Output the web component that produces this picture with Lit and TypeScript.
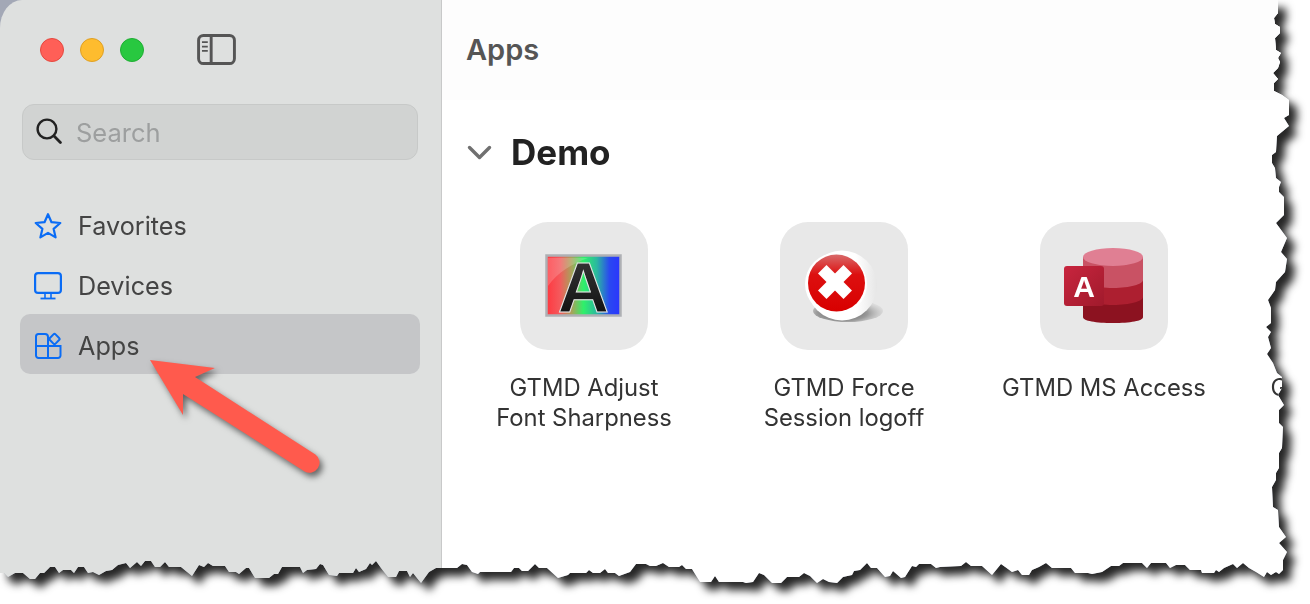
import { LitElement, html, css, svg } from "lit";
import { customElement } from "lit/decorators.js";

// Torn-paper outline of the captured window, as [x, y] pairs, clockwise from the top left.
const EDGE: number[][] = [
  [0,0],[1278,0],[1278,13],[1274,18],[1275,24],[1280,27],[1280,33],[1275,38],[1276,50],[1281,53],[1278,58],[1280,62],[1278,68],[1273,73],[1278,79],[1274,83],[1274,91],[1282,95],[1289,100],[1289,115],[1284,118],[1289,126],[1277,136],[1276,152],[1272,155],[1272,163],[1275,168],[1276,178],[1281,182],[1279,187],[1279,192],[1284,197],
  [1284,215],[1276,223],[1287,238],[1281,252],[1287,259],[1285,272],[1276,282],[1275,290],[1268,300],[1271,308],[1271,323],[1266,327],[1271,332],[1268,337],[1271,348],[1267,354],[1273,363],[1277,373],[1282,377],[1282,388],[1278,395],[1284,405],[1279,410],[1279,423],[1283,427],[1282,448],[1279,453],[1279,468],[1276,473],[1276,480],[1272,487],[1273,507],[1278,510],[1279,527],[1286,537],[1279,543],[1287,552],[1283,560],
  [1283,570],[1279,574],[1276,572],[1271,575],[1267,572],[1264,577],[1256,572],[1249,568],[1243,563],[1237,568],[1233,564],[1224,568],[1219,572],[1216,570],[1214,573],[1202,573],[1201,570],[1190,570],[1185,565],[1176,565],[1170,568],[1166,563],[1151,563],[1147,568],[1142,563],[1123,563],[1119,566],[1111,566],[1102,572],[1092,574],[1088,573],[1075,573],[1071,568],[1052,568],[1046,563],[1039,567],[1032,570],[1029,575],[1022,575],[1018,570],[1012,572],[1008,569],[1001,564],[992,575],[982,566],[971,566],[966,562],[961,566],[940,567],[936,568],[931,564],[919,564],[916,567],[912,566],[905,577],[901,578],[893,571],[890,576],[885,577],[877,568],[871,568],[867,563],[860,570],[854,571],[852,575],[843,577],[837,583],[829,582],[823,579],[817,583],[810,576],[804,573],[799,577],[787,577],[781,583],[772,583],[764,575],[759,573],[753,582],[746,583],[743,582],[719,582],[715,576],[711,582],[700,582],[692,569],[686,569],[682,565],[679,567],[669,567],[663,563],[656,566],[650,566],
  [646,564],[636,564],[630,572],[619,576],[615,573],[608,573],[605,569],[600,573],[593,573],[589,570],[586,573],[570,573],[568,575],[558,578],[547,568],[539,568],[535,564],[528,571],[522,571],[519,568],[514,568],[511,572],[480,572],[478,574],[472,572],[467,565],[462,564],[457,568],[436,568],[429,572],[421,583],[413,573],[410,577],[407,571],[399,571],[396,577],[388,577],[381,568],[376,561],[372,565],[370,563],[366,569],[359,572],[356,568],[353,573],[339,573],[337,576],[329,575],[323,565],[320,564],[316,569],[307,570],[303,573],[300,567],[282,567],[278,574],[274,574],[269,578],[255,578],[249,568],[246,568],[239,574],[236,572],[229,572],[225,566],[213,566],[208,563],[204,567],[199,565],[192,576],[181,567],[169,567],[165,562],[160,567],[155,567],[151,561],[145,561],[141,566],[137,562],[130,568],[126,563],[118,565],[112,570],[106,571],[99,575],[93,572],[88,573],[84,567],[78,567],[74,573],[71,570],[63,570],[59,573],[55,567],[50,567],[44,573],[40,573],[35,579],[30,579],[23,573],[15,573],[8,577],[4,573],[0,573],
];
const CLIP = `polygon(${EDGE.map(([x, y]) => `${x}px ${y}px`).join(",")})`;

const ICONS = {
  panel: svg`<svg class="panel-icon" viewBox="0 0 40 32" fill="none" stroke="#555" stroke-width="3"><rect x="1.5" y="1.5" width="37" height="29" rx="5"/><path d="M14.5 2v28"/><path d="M5 8.5h6M5 13h6M5 17.5h6" stroke-width="1.8"/></svg>`,
  search: svg`<svg class="search-icon" viewBox="0 0 26 26" fill="none" stroke="#222" stroke-width="2.4"><circle cx="11" cy="11" r="9.4"/><path d="M17.8 17.8l6.6 6.6" stroke-linecap="round" stroke-width="2.8"/></svg>`,
  star: svg`<svg class="nav-icon" viewBox="0 0 28 28" fill="none" stroke="#0a6cf5" stroke-width="2.2" stroke-linejoin="round"><path d="M14 2.2l3.5 8 8.8.8-6.7 5.8 2 8.6L14 20.9l-7.6 4.5 2-8.6L1.700 11l8.800-.8z"/></svg>`,
  monitor: svg`<svg class="nav-icon" viewBox="0 0 28 28" fill="none" stroke="#0a6cf5" stroke-width="2.2"><rect x="1.100" y="1.100" width="25.800" height="19.800" rx="3"/><path d="M11 21v5M17 21v5" stroke-width="1.600"/><path d="M6.500 26.500h15" stroke-width="1.800"/></svg>`,
  apps: svg`<svg class="nav-icon" viewBox="0 0 28 28" fill="none" stroke="#0a6cf5" stroke-width="2"><path d="M14 8.500V26H4.500A2.500 2.500 0 0 1 2 23.500V4.500A2.500 2.500 0 0 1 4.500 2H11a3 3 0 0 1 3 3v3.500z"/><path d="M2 14h24.500v9.500a2.500 2.500 0 0 1-2.500 2.500h-10"/><rect x="16.500" y="3" width="8" height="8" rx="1.500" transform="rotate(45 20.500 7)"/></svg>`,
};

const SHARPNESS = svg`<svg class="art" viewBox="0 0 128 128">
  <defs>
    <linearGradient id="rgb" x1="0" x2="1" y1="0" y2="0">
      <stop offset="0" stop-color="#ff3840"/><stop offset=".18" stop-color="#f4595c"/><stop offset=".34" stop-color="#a8a25a"/>
      <stop offset=".5" stop-color="#2ff06a"/><stop offset=".68" stop-color="#2bb8a0"/><stop offset=".85" stop-color="#2a48f0"/><stop offset="1" stop-color="#2a35ff"/>
    </linearGradient>
    <linearGradient id="ink" x1="0" x2="0" y1="0" y2="1"><stop offset="0" stop-color="#3c3c3c"/><stop offset="1" stop-color="#0a0a0a"/></linearGradient>
  </defs>
  <rect x="26.500" y="33.500" width="74" height="60" fill="url(#rgb)" stroke="#aeb0b4" stroke-width="2.500"/>
  <path d="M28 36h40c-16 6-30 14-40 28z" fill="#fff" opacity=".18"/>
  <text x="63.500" y="90" text-anchor="middle" class="glyph-a" fill="url(#ink)" stroke="#e8e8e8" stroke-width="1">A</text>
</svg>`;

const FORCE_OFF = svg`<svg class="art" viewBox="0 0 128 128">
  <defs>
    <radialGradient id="drop" cx=".42" cy=".6" r=".6"><stop offset="0" stop-color="#555"/><stop offset=".6" stop-color="#999"/><stop offset="1" stop-color="#c8c8c8" stop-opacity=".4"/></radialGradient>
    <linearGradient id="side" x1="0" x2="1"><stop offset=".7" stop-color="#fff"/><stop offset="1" stop-color="#e6e6e6"/></linearGradient>
    <linearGradient id="red" x1="0" x2="0" y1="0" y2="1"><stop offset="0" stop-color="#d86a6a"/><stop offset=".35" stop-color="#dd1010"/><stop offset="1" stop-color="#d80000"/></linearGradient>
  </defs>
  <ellipse cx="68" cy="89" rx="35" ry="11" fill="url(#drop)"/>
  <circle cx="62" cy="63.500" r="35" fill="url(#side)"/>
  <circle cx="56" cy="62" r="31" fill="#fff"/>
  <circle cx="56.500" cy="61" r="28.500" fill="url(#red)"/>
  <g fill="#fff" transform="rotate(45 55 60)"><rect x="49" y="42" width="12" height="36"/><rect x="37" y="54" width="36" height="12"/></g>
</svg>`;

const ACCESS = svg`<svg class="art" viewBox="0 0 128 128">
  <defs><linearGradient id="tile" x1="0" x2="1" y1="0" y2="1"><stop offset="0" stop-color="#c8253e"/><stop offset="1" stop-color="#a01a2c"/></linearGradient></defs>
  <path d="M43 95V70h60v25c0 4-13 6-30 6s-30-2-30-6z" fill="#8c1220"/>
  <path d="M43 75V52h60v23c0 4-13 8-30 8s-30-4-30-8z" fill="#ad1f30"/>
  <path d="M43 58V35h60v23c0 4-13 8-30 8s-30-4-30-8z" fill="#c95264"/>
  <ellipse cx="73" cy="35" rx="30" ry="9" fill="#e07f93"/>
  <rect x="24" y="44" width="40" height="40" rx="3" fill="url(#tile)"/>
  <text x="44" y="75" text-anchor="middle" class="glyph-access" fill="#fff">A</text>
</svg>`;

const APPS = [
  { lines: ["GTMD Adjust", "Font Sharpness"], art: SHARPNESS },
  { lines: ["GTMD Force", "Session logoff"], art: FORCE_OFF },
  { lines: ["GTMD MS Access"], art: ACCESS },
  { lines: ["GTMD Terminals"], art: null },
];

const NAV = [
  { label: "Favorites", icon: ICONS.star },
  { label: "Devices", icon: ICONS.monitor },
  { label: "Apps", icon: ICONS.apps, active: true },
];

@customElement("app-root")
export class AppRoot extends LitElement {
  static styles = css`
    :host { display: block; width: 1310px; height: 604px; overflow: hidden; background: #fff; position: relative;
      font-family: Inter, "Liberation Sans", sans-serif; }
    .drop { filter: drop-shadow(8px 8px 4px rgba(0,0,0,.85)); height: 604px; }
    .window { display: flex; height: 604px; width: 1310px; background: #a3a8b6; }
    .sidebar { width: 442px; flex: none; box-sizing: border-box; background: #dee0df; border-right: 1px solid #c8c9c9;
      border-top-left-radius: 22px 28px; padding: 0 21px 0 20px; }
    .titlebar { height: 100px; display: flex; align-items: center; padding-left: 20px; }
    .light { width: 24px; height: 24px; border-radius: 50%; box-sizing: border-box; margin-right: 16px; border: 1px solid; }
    .red { background: #ff5f57; border-color: #e5483f; }
    .yellow { background: #febc2e; border-color: #dfa023; }
    .green { background: #28c840; border-color: #1fae33; }
    .panel-icon { width: 39px; height: 31px; margin: 0 0 2px 37px; }
    .search { height: 56px; margin: 4px 2px 0 2px; box-sizing: border-box; background: #d1d3d2; border: 1px solid #c7c9c8;
      border-radius: 12px; display: flex; align-items: center; padding: 0 0 0 13px; gap: 14px; font-size: 25.500px; color: #9d9f9f; }
    .search-icon { width: 26px; height: 26px; margin-top: -2px; }
    nav { margin-top: 34px; }
    .item { height: 60px; box-sizing: border-box; padding: 4px 0 0 14px; display: flex; align-items: center; border-radius: 10px; gap: 16px;
      font-size: 25.200px; color: #444; }
    .item.active { background: #c5c6c8; }
    .nav-icon { width: 28px; height: 28px; flex: none; }
    main { flex: 1; min-width: 0; background: #fff; overflow: hidden; }
    .head { height: 100px; box-sizing: border-box; padding: 0 0 2px 24px; background: #fdfdfd; display: flex; align-items: center;
      font-size: 29px; font-weight: 600; color: #555; }
    .section { display: flex; align-items: center; height: 40px; margin-top: 32px; padding-left: 25px; gap: 19px;
      font-size: 35px; font-weight: 700; color: #222; }
    .chev { width: 25px; height: 15px; }
    .grid { display: grid; grid-template-columns: repeat(4, 260px); margin: 50px 0 0 12px; }
    .app { display: flex; flex-direction: column; align-items: center; }
    .tile { width: 128px; height: 128px; border-radius: 28px; background: #e8e8e8; }
    .tile.blank { background: none; }
    .art { display: block; width: 128px; height: 128px; }
    .glyph-a { font: 700 71px "Liberation Sans", sans-serif; }
    .glyph-access { font: 700 30px "Liberation Sans", sans-serif; }
    .label { margin-top: 23px; font-size: 23.800px; line-height: 30px; color: #333; text-align: center; white-space: nowrap; }
    .label div { white-space: nowrap; }
    .arrow { position: absolute; left: 0; top: 0; width: 1310px; height: 604px; pointer-events: none;
      filter: drop-shadow(3px 4px 3px rgba(0,0,0,.55)); }
  `;

  render() {
    return html`
      <div class="drop">
        <div class="window" style="clip-path:${CLIP}">
          <aside class="sidebar">
            <div class="titlebar">
              <span class="light red"></span><span class="light yellow"></span><span class="light green"></span>
              ${ICONS.panel}
            </div>
            <div class="search">${ICONS.search}<span>Search</span></div>
            <nav>
              ${NAV.map((n) => html`<div class="item ${n.active ? "active" : ""}">${n.icon}<span>${n.label}</span></div>`)}
            </nav>
          </aside>
          <main>
            <div class="head">Apps</div>
            <div class="section">
              <svg class="chev" viewBox="0 0 25 15" fill="none" stroke="#707070" stroke-width="3.400" stroke-linecap="round" stroke-linejoin="round"><path d="M2.500 2.500l10 10 10-10"/></svg>
              <span>Demo</span>
            </div>
            <div class="grid">
              ${APPS.map((a) => html`
                <div class="app">
                  <div class="tile ${a.art ? "" : "blank"}">${a.art}</div>
                  <div class="label">${a.lines.map((l) => html`<div>${l}</div>`)}</div>
                </div>`)}
            </div>
          </main>
        </div>
      </div>
      <svg class="arrow" viewBox="0 0 1310 604">
        <path d="M150 360L215 368 195 377 315.400 454.600A10 10 0 0 1 304.600 471.400L183 394V415z" fill="#ff5a4d"/>
      </svg>
    `;
  }
}
